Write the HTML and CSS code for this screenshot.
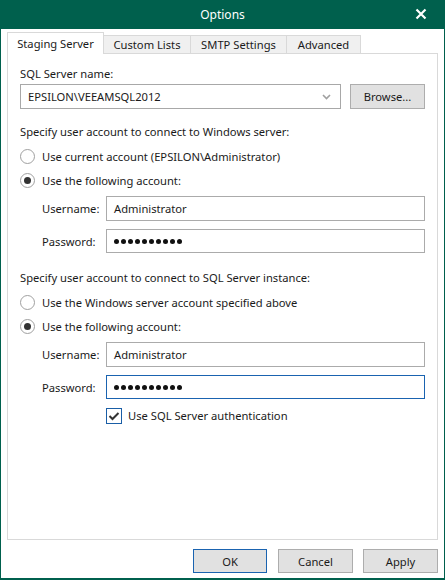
FILE: index.html
```html
<!DOCTYPE html>
<html>
<head>
<meta charset="utf-8">
<link rel="stylesheet" href="styles.css">
</head>
<body>
<div class="window">
  <div class="titlebar">
    <span class="title">Options</span>
    <svg class="close" width="12" height="12" viewBox="0 0 12 12"><path d="M1.5 1.5 L10.5 10.5 M10.5 1.5 L1.5 10.5" stroke="#fff" stroke-width="2.2" fill="none"/></svg>
  </div>
  <div class="content">
    <div class="tabs">
      <div class="tab active">Staging Server</div>
      <div class="tab t2">Custom Lists</div>
      <div class="tab t3">SMTP Settings</div>
      <div class="tab t4">Advanced</div>
    </div>
    <div class="panel">
      <div class="label first">SQL Server name:</div>
      <div class="combo-row">
        <div class="combo">
          <span>EPSILON\VEEAMSQL2012</span>
          <svg class="chev" width="9" height="6" viewBox="0 0 9 6"><path d="M1 1 L4.5 4.5 L8 1" stroke="#a0a0a0" stroke-width="1.6" fill="none"/></svg>
        </div>
        <div class="btn browse">Browse...</div>
      </div>

      <div class="label heading h1">Specify user account to connect to Windows server:</div>
      <div class="radio-row r-first"><span class="radio"></span><span>Use current account (EPSILON\Administrator)</span></div>
      <div class="radio-row"><span class="radio checked"></span><span>Use the following account:</span></div>
      <div class="field-row f-first"><span class="flabel">Username:</span><div class="input">Administrator</div></div>
      <div class="field-row f-second"><span class="flabel">Password:</span><div class="input"><span class="dots"><i></i><i></i><i></i><i></i><i></i><i></i><i></i><i></i><i></i><i></i></span></div></div>

      <div class="label heading h2">Specify user account to connect to SQL Server instance:</div>
      <div class="radio-row r-first"><span class="radio"></span><span>Use the Windows server account specified above</span></div>
      <div class="radio-row"><span class="radio checked"></span><span>Use the following account:</span></div>
      <div class="field-row f-first"><span class="flabel">Username:</span><div class="input">Administrator</div></div>
      <div class="field-row f-second"><span class="flabel">Password:</span><div class="input focus"><span class="dots"><i></i><i></i><i></i><i></i><i></i><i></i><i></i><i></i><i></i><i></i></span></div></div>
      <div class="check-row">
        <span class="checkbox"><svg width="12" height="10" viewBox="0 0 12 10"><path d="M1.5 5 L4.5 8 L10.5 2" stroke="#333" stroke-width="2" fill="none"/></svg></span>
        <span>Use SQL Server authentication</span>
      </div>
    </div>
    <div class="footer">
      <div class="btn default">OK</div>
      <div class="btn">Cancel</div>
      <div class="btn">Apply</div>
    </div>
  </div>
</div>
</body>
</html>
```
FILE: styles.css
```css
* { box-sizing: border-box; }
html, body { margin: 0; padding: 0; background: #fff; }
body {
  font-family: "Noto Sans", "Liberation Sans", sans-serif;
  font-size: 11.2px;
  color: #1a1a1a;
}
.window {
  width: 445px;
  height: 580px;
  border: 1px solid #00604d;
  border-top: none;
  border-bottom-width: 2px;
  display: flex;
  flex-direction: column;
  background: #fff;
}
.titlebar {
  height: 29px;
  margin: 0 -1px;
  background: #00604d;
  color: #fff;
  display: flex;
  align-items: center;
  justify-content: center;
  position: relative;
  font-size: 12px;
}
.title { margin-top: -1px; }
.close {
  position: absolute;
  right: 18px;
  top: 8px;
}
.content {
  padding: 0 6px;
  flex: 1;
  display: flex;
  flex-direction: column;
}
.tabs {
  display: flex;
  align-items: flex-end;
  margin-top: 3px;
  height: 21px;
  position: relative;
  z-index: 1;
}
.tab {
  height: 18px;
  border: 1px solid #d9d9d9;
  border-bottom: none;
  background: #f0f0f0;
  display: flex;
  align-items: center;
  justify-content: center;
  margin-left: -1px;
  padding-bottom: 1px;
}
.tab.active {
  height: 22px;
  margin-bottom: -1px;
  margin-left: 0;
  background: #fff;
  width: 97px;
  padding-bottom: 0;
}
.t2 { width: 88px; }
.t3 { width: 97px; }
.t4 { width: 75px; }
.panel {
  height: 487px;
  border: 1px solid #d9d9d9;
  padding: 12px 11px 0 12px;
  display: flex;
  flex-direction: column;
}
.label { height: 16px; line-height: 16px; }
.combo-row {
  display: flex;
  margin-top: 2px;
  height: 25px;
}
.combo {
  width: 321px;
  height: 25px;
  border: 1px solid #a8a8a8;
  padding: 0 7px;
  display: flex;
  align-items: center;
  justify-content: space-between;
}
.chev { margin-right: 2px; margin-top: 1px; }
.btn {
  border: 1px solid #adadad;
  background: #e1e1e1;
  display: flex;
  align-items: center;
  justify-content: center;
  height: 25px;
}
.browse { width: 75px; margin-left: 9px; }
.h1 { margin-top: 15px; }
.h2 { margin-top: 17px; }
.radio-row {
  height: 24px;
  display: flex;
  align-items: center;
}
.r-first { margin-top: 4px; }
.radio {
  width: 15px;
  height: 15px;
  border: 1px solid #a0a0a0;
  border-radius: 50%;
  margin-right: 7px;
  display: flex;
  align-items: center;
  justify-content: center;
  background: #fff;
}
.radio.checked::after {
  content: "";
  width: 7px;
  height: 7px;
  border-radius: 50%;
  background: #333;
}
.field-row {
  display: flex;
  align-items: center;
  padding-left: 22px;
  height: 24px;
}
.f-first { margin-top: 4px; height: 25px; }
.f-second { margin-top: 8px; }
.flabel { width: 64px; }
.input {
  width: 319px;
  height: 100%;
  border: 1px solid #ababab;
  padding: 0 7px;
  display: flex;
  align-items: center;
}
.input.focus { border-color: #1a63b0; }
.dots { display: flex; }
.dots i {
  width: 5px;
  height: 5px;
  border-radius: 50%;
  background: #111;
  margin-right: 2px;
}
.check-row {
  display: flex;
  align-items: center;
  margin-top: 8px;
  padding-left: 86px;
  height: 17px;
}
.checkbox {
  width: 16px;
  height: 16px;
  border: 1px solid #1a5ea6;
  margin-right: 6px;
  display: flex;
  align-items: center;
  justify-content: center;
  background: #fff;
}
.footer {
  display: flex;
  justify-content: flex-end;
  margin-top: 9px;
  gap: 10px;
}
.footer .btn { width: 75px; height: 24px; }
.footer .btn.default { width: 74px; border-color: #1a63b0; margin-right: 1px; }
```
